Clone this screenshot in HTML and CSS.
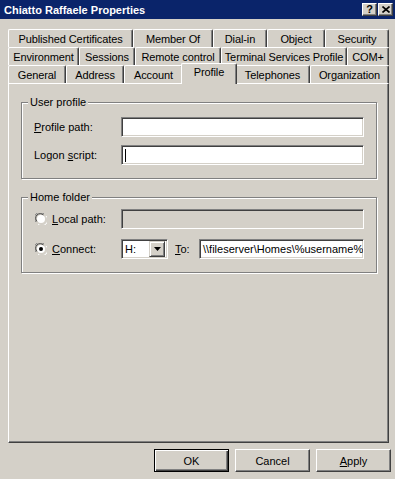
FILE: index.html
```html
<!DOCTYPE html>
<html lang="en">
<head>
    <meta charset="UTF-8">
    <title>Chiatto Raffaele Properties</title>
    <link rel="stylesheet" href="styles.css">
</head>
<body>
    <div class="window">
        <div class="titlebar">
            <span class="title">Chiatto Raffaele Properties</span>
            <div class="caption-buttons">
                <div class="caption-btn help">?</div>
                <div class="caption-btn">
                    <svg width="8" height="7" viewBox="0 0 8 7">
                        <path d="M0.5 0.5 L7.5 6.5 M7.5 0.5 L0.5 6.5" stroke="#000" stroke-width="1.6" fill="none"/>
                    </svg>
                </div>
            </div>
        </div>

        <div class="tabs">
            <div class="tab-row row-back1">
                <div class="tab">Published Certificates</div>
                <div class="tab">Member Of</div>
                <div class="tab">Dial-in</div>
                <div class="tab">Object</div>
                <div class="tab">Security</div>
            </div>
            <div class="tab-row row-back2">
                <div class="tab">Environment</div>
                <div class="tab">Sessions</div>
                <div class="tab">Remote control</div>
                <div class="tab">Terminal Services Profile</div>
                <div class="tab">COM+</div>
            </div>
            <div class="tab-row row-front">
                <div class="tab">General</div>
                <div class="tab">Address</div>
                <div class="tab">Account</div>
                <div class="tab active">Profile</div>
                <div class="tab">Telephones</div>
                <div class="tab">Organization</div>
            </div>
        </div>

        <div class="panel">
            <fieldset class="group group-profile">
                <legend>User profile</legend>
                <div class="row">
                    <span class="label"><span><u>P</u>rofile path:</span></span>
                    <div class="field"></div>
                </div>
                <div class="row">
                    <span class="label"><span>Logon <u>s</u>cript:</span></span>
                    <div class="field"><span class="caret"></span></div>
                </div>
            </fieldset>

            <fieldset class="group group-home">
                <legend>Home folder</legend>
                <div class="row">
                    <span class="label">
                        <svg class="radio" width="12" height="12" viewBox="0 0 12 12">
                            <path d="M1 9 A5.5 5.5 0 0 1 9 1" stroke="#808080" fill="none"/>
                            <path d="M2 8.5 A4.5 4.5 0 0 1 8.5 2" stroke="#404040" fill="none"/>
                            <circle cx="6" cy="6" r="4" fill="#fff"/>
                            <path d="M11 3 A5.5 5.5 0 0 1 3 11" stroke="#fff" fill="none"/>
                            <path d="M10 3.5 A4.5 4.5 0 0 1 3.5 10" stroke="#d4d0c8" fill="none"/>
                        </svg>
                        <span><u>L</u>ocal path:</span>
                    </span>
                    <div class="field disabled"></div>
                </div>
                <div class="row">
                    <span class="label">
                        <svg class="radio" width="12" height="12" viewBox="0 0 12 12">
                            <path d="M1 9 A5.5 5.5 0 0 1 9 1" stroke="#808080" fill="none"/>
                            <path d="M2 8.5 A4.5 4.5 0 0 1 8.5 2" stroke="#404040" fill="none"/>
                            <circle cx="6" cy="6" r="4" fill="#fff"/>
                            <path d="M11 3 A5.5 5.5 0 0 1 3 11" stroke="#fff" fill="none"/>
                            <path d="M10 3.5 A4.5 4.5 0 0 1 3.5 10" stroke="#d4d0c8" fill="none"/>
                            <circle cx="6" cy="6" r="2" fill="#000"/>
                        </svg>
                        <span><u>C</u>onnect:</span>
                    </span>
                    <div class="combo">
                        <span class="combo-value">H:</span>
                        <span class="combo-btn">
                            <svg width="7" height="4" viewBox="0 0 7 4"><path d="M0 0 H7 L3.5 4 Z" fill="#000"/></svg>
                        </span>
                    </div>
                    <span class="to-label"><u>T</u>o:</span>
                    <div class="field">\\fileserver\Homes\%username%</div>
                </div>
            </fieldset>
        </div>

        <div class="buttons">
            <button class="btn default">OK</button>
            <button class="btn">Cancel</button>
            <button class="btn"><u>A</u>pply</button>
        </div>
    </div>
</body>
</html>
```

FILE: styles.css
```css
body {
    margin: 0;
    background: #d4d0c8;
    font-family: "Liberation Sans", Arial, sans-serif;
    font-size: 11px;
    color: #000;
}
.window {
    width: 395px;
    height: 479px;
    overflow: hidden;
}
.titlebar {
    height: 19px;
    background: #0a246a;
    color: #fff;
    display: flex;
    align-items: center;
    justify-content: space-between;
    padding: 0 2px 0 4px;
}
.title {
    font-weight: bold;
    font-size: 11px;
}
.caption-buttons {
    display: flex;
    gap: 1px;
}
.caption-btn {
    width: 15px;
    height: 13px;
    box-sizing: border-box;
    background: #d4d0c8;
    border: 1px solid;
    border-color: #fff #404040 #404040 #fff;
    box-shadow: inset -1px -1px #808080;
    display: flex;
    align-items: center;
    justify-content: center;
    color: #000;
}
.caption-btn.help {
    font-weight: bold;
    font-size: 11px;
    line-height: 11px;
}

/* tabs */
.tabs {
    padding: 10px 6px 0 8px;
    letter-spacing: -0.1px;
}
.tab-row {
    display: grid;
    grid-template-rows: 18px;
}
.row-back1 { grid-template-columns: 125px 80px 54px 58px 64px; }
.row-back2 { grid-template-columns: 71px 56px 86px 126px 42px; }
.row-front { grid-template-columns: 58px 58px 59px 52px 75px 79px; }
.tab {
    box-sizing: border-box;
    height: 18px;
    border-top: 1px solid #fff;
    border-left: 1px solid #fff;
    border-right: 1px solid #404040;
    box-shadow: inset -1px 0 #808080;
    border-radius: 2px 2px 0 0;
    display: flex;
    align-items: center;
    justify-content: center;
    white-space: nowrap;
    background: #d4d0c8;
}
.tab.active {
    height: 21px;
    align-self: end;
    margin: 0 -2px -1px;
    position: relative;
    z-index: 1;
    align-items: flex-start;
    padding-top: 2px;
}

/* panel */
.panel {
    box-sizing: border-box;
    height: 360px;
    margin: 0 6px 0 8px;
    border-top: 1px solid #fff;
    border-left: 1px solid #fff;
    border-right: 1px solid #404040;
    border-bottom: 1px solid #404040;
    box-shadow: inset -1px -1px #808080;
    padding: 12px 11px 0 12px;
}
.group {
    margin: 0;
    border: 1px solid #808080;
    box-shadow: 1px 1px 0 #fff, inset 1px 1px 0 #fff;
    padding: 8px 12px 13px 12px;
    min-width: 0;
}
.group legend {
    padding: 0 2px;
    margin-left: -6px;
    line-height: 13px;
    background: #d4d0c8;
}
.group-home {
    margin-top: 12px;
    padding-top: 5px;
}
.row {
    display: flex;
    align-items: center;
    height: 20px;
}
.group-profile .row + .row {
    margin-top: 8px;
}
.group-home .row + .row {
    margin-top: 10px;
}
.label {
    width: 87px;
    flex: none;
    display: flex;
    align-items: center;
    white-space: nowrap;
}
.radio {
    margin: 0 5px 0 1px;
    flex: none;
}
.field {
    flex: 1;
    height: 20px;
    box-sizing: border-box;
    background: #fff;
    border: 1px solid;
    border-color: #808080 #fff #fff #808080;
    box-shadow: inset 1px 1px #404040, inset -1px -1px #d4d0c8;
    display: flex;
    align-items: center;
    padding-left: 3px;
    white-space: nowrap;
    overflow: hidden;
}
.field.disabled {
    background: #d4d0c8;
}
.caret {
    display: block;
    width: 1px;
    height: 13px;
    background: #000;
}
.combo {
    width: 47px;
    height: 20px;
    box-sizing: border-box;
    background: #fff;
    border: 1px solid;
    border-color: #808080 #fff #fff #808080;
    box-shadow: inset 1px 1px #404040, inset -1px -1px #d4d0c8;
    display: flex;
    align-items: center;
    justify-content: space-between;
    padding: 2px 2px 2px 3px;
    flex: none;
}
.combo-btn {
    width: 16px;
    height: 16px;
    box-sizing: border-box;
    background: #d4d0c8;
    border: 1px solid;
    border-color: #d4d0c8 #404040 #404040 #d4d0c8;
    box-shadow: inset 1px 1px #fff, inset -1px -1px #808080;
    display: flex;
    align-items: center;
    justify-content: center;
}
.to-label {
    width: 24px;
    margin-left: 7px;
    flex: none;
}

/* dialog buttons */
.buttons {
    display: flex;
    justify-content: flex-end;
    gap: 6px;
    padding: 6px 4px 0 0;
}
.btn {
    width: 75px;
    height: 23px;
    box-sizing: border-box;
    font: inherit;
    color: #000;
    background: #d4d0c8;
    border: 1px solid;
    border-color: #fff #404040 #404040 #fff;
    box-shadow: inset -1px -1px #808080;
    padding: 0;
}
.btn.default {
    border-color: #000;
    box-shadow: inset 1px 1px #fff, inset -1px -1px #404040, inset -2px -2px #808080;
}
```
